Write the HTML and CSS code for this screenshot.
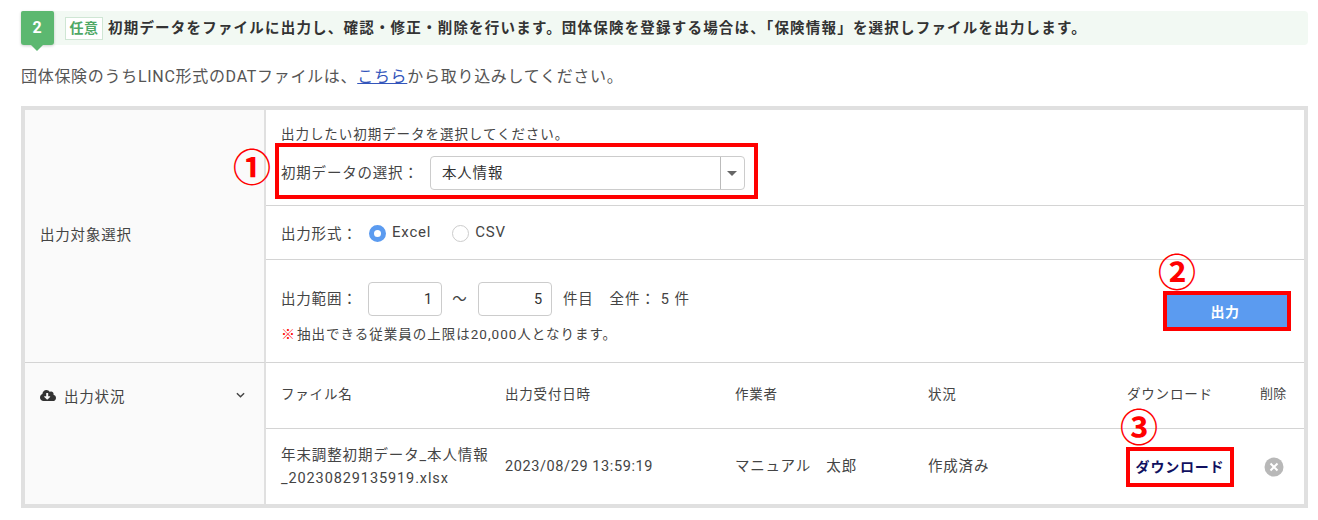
FILE: index.html
```html
<!DOCTYPE html>
<html lang="ja">

<head>
    <meta charset="UTF-8">
    <title>初期データ出力</title>
    <link rel="stylesheet" href="styles.css">
</head>

<body>
    <div class="step">
        <div class="step-no">2</div>
        <span class="step-tag">任意</span>
        <span class="step-text">初期データをファイルに出力し、確認・修正・削除を行います。団体保険を登録する場合は、「保険情報」を選択しファイルを出力します。</span>
    </div>
    <p class="lead">団体保険のうちLINC形式のDATファイルは、<a href="#">こちら</a>から取り込みしてください。</p>

    <div class="panel">
        <div class="side side-target">出力対象選択</div>
        <div class="main">
            <div class="row row-select">
                <p class="hint">出力したい初期データを選択してください。</p>
                <div class="select-line">
                    <label class="select-label">初期データの選択：</label>
                    <div class="select">
                        <span class="select-value">本人情報</span>
                        <span class="select-arrow"></span>
                    </div>
                    <span class="mark-box mark-select"></span>
                    <span class="mark-no mark-no-1">①</span>
                </div>
            </div>
            <div class="row row-format">
                <span class="format-label">出力形式：</span>
                <span class="radio radio-on"></span><span class="radio-text">Excel</span>
                <span class="radio"></span><span class="radio-text">CSV</span>
            </div>
            <div class="row row-range">
                <div class="range-left">
                    <div class="range-line">
                        <span class="range-label">出力範囲：</span>
                        <span class="num-input">1</span>
                        <span class="tilde">～</span>
                        <span class="num-input">5</span>
                        <span class="range-unit">件目</span>
                        <span class="range-total">全件： 5 件</span>
                    </div>
                    <p class="note"><span class="note-mark">※</span>抽出できる従業員の上限は20,000人となります。</p>
                </div>
                <div class="output-wrap">
                    <span class="mark-no mark-no-2">②</span>
                    <button class="output-btn">出力</button>
                </div>
            </div>
        </div>

        <div class="side side-status">
            <svg class="cloud" viewBox="0 0 640 512" width="16" height="13">
                <path fill="#333" d="M537.6 226.6c4.1-10.7 6.4-22.4 6.4-34.6 0-53-43-96-96-96-19.7 0-38.1 6-53.3 16.2C367 64.2 315.3 32 256 32c-88.4 0-160 71.6-160 160 0 2.7.1 5.4.2 8.1C40.2 219.8 0 273.2 0 336c0 79.5 64.5 144 144 144h368c70.7 0 128-57.3 128-128 0-61.9-44-113.6-102.4-125.4zm-132.9 88.7L299.3 420.7c-6.2 6.2-16.4 6.2-22.6 0L171.3 315.3c-10.1-10.1-2.9-27.3 11.3-27.3H248V176c0-8.8 7.2-16 16-16h48c8.8 0 16 7.2 16 16v112h65.4c14.2 0 21.4 17.2 11.3 27.3z" />
            </svg>
            <span class="status-title">出力状況</span>
            <svg class="chev" viewBox="0 0 10 6" width="9" height="6">
                <path d="M1 1l4 4 4-4" fill="none" stroke="#444" stroke-width="1.6" />
            </svg>
        </div>
        <div class="status">
            <div class="status-row status-head">
                <span class="c-name">ファイル名</span>
                <span class="c-date">出力受付日時</span>
                <span class="c-user">作業者</span>
                <span class="c-state">状況</span>
                <span class="c-dl">ダウンロード</span>
                <span class="c-del head-del">削除</span>
            </div>
            <div class="status-row status-body">
                <span class="c-name">年末調整初期データ_本人情報<br>_20230829135919.xlsx</span>
                <span class="c-date date-value">2023/08/29 13:59:19</span>
                <span class="c-user">マニュアル　太郎</span>
                <span class="c-state">作成済み</span>
                <span class="c-dl dl-cell">
                    <span class="mark-no mark-no-3">③</span>
                    <a class="dl-link" href="#">ダウンロード</a>
                </span>
                <span class="c-del">
                    <svg viewBox="0 0 20 20" width="20" height="20">
                        <circle cx="10" cy="10" r="9.5" fill="#b8b8b8" />
                        <path d="M6.5 6.5l7 7M13.5 6.5l-7 7" stroke="#fff" stroke-width="2" />
                    </svg>
                </span>
            </div>
        </div>
    </div>
</body>

</html>
```

FILE: styles.css
```css
body {
    font-family: Roboto, "Noto Sans CJK JP", sans-serif;
    color: #444;
    background-color: white;
    margin: 0;
    padding: 11px 10px 0 21px;
    font-size: 14.5px;
    letter-spacing: 0.8px;
}

p {
    margin: 0;
}

.step {
    display: flex;
    align-items: center;
    height: 34px;
    background-color: #f2f9f3;
    border-radius: 0 4px 4px 0;
}

.step-no {
    position: relative;
    width: 33px;
    height: 34px;
    line-height: 34px;
    text-align: center;
    color: white;
    font-weight: bold;
    font-size: 16px;
    background-color: #5cb870;
    border-radius: 2px 2px 3px 3px;
    box-shadow: 0 1px 3px rgba(0, 0, 0, 0.2);
}

.step-no::after {
    content: "";
    position: absolute;
    left: 10px;
    top: 34px;
    border-top: 6px solid #5cb870;
    border-left: 6px solid transparent;
    border-right: 6px solid transparent;
}

.step-tag {
    margin-left: 11px;
    width: 38px;
    height: 23px;
    line-height: 20px;
    box-sizing: border-box;
    text-align: center;
    background-color: white;
    border: 1px solid #cfe6d4;
    color: #4fa866;
    font-size: 14px;
    font-weight: bold;
    letter-spacing: 0.5px;
}

.step-text {
    margin-left: 5px;
    padding-bottom: 3px;
    color: #333;
    font-size: 14.5px;
    letter-spacing: 1.2px;
    font-weight: bold;
}

.lead {
    margin-top: 20px;
    font-size: 16px;
    letter-spacing: 0.7px;
    line-height: 24px;
    color: #555;
}

.lead a {
    color: #3355bb;
}

.panel {
    display: grid;
    grid-template-columns: 241px 1fr;
    margin-top: 17px;
    border: 4px solid #e0e0e0;
}

.side {
    background-color: #fafafa;
    border-right: 2px solid #e0e0e0;
    padding-left: 15px;
}

.side-target {
    display: flex;
    align-items: center;
    padding-bottom: 6px;
    border-bottom: 1px solid #d4d4d4;
}

.side-status {
    display: flex;
    align-items: center;
    height: 141px;
    box-sizing: border-box;
    padding-bottom: 77px;
    padding-right: 19px;
}

.status-title {
    margin-left: 8px;
    flex: 1;
}

.row {
    border-bottom: 1px solid #d4d4d4;
    padding-left: 15px;
    box-sizing: border-box;
}

.row-select {
    height: 96px;
    padding-top: 14px;
}

.hint {
    font-size: 13.5px;
    letter-spacing: 0.95px;
    line-height: 20px;
}

.select-line {
    position: relative;
    display: flex;
    align-items: center;
    margin-top: 12px;
}

.select-label {
    width: 149px;
    padding-bottom: 3px;
}

.select {
    display: flex;
    justify-content: space-between;
    align-items: center;
    width: 315px;
    height: 34px;
    box-sizing: border-box;
    border: 1px solid #ccc;
    border-radius: 4px;
    padding-left: 11px;
    color: #333;
}

.select-value {
    padding-bottom: 3px;
}

.select-arrow {
    position: relative;
    width: 23px;
    height: 32px;
    border-left: 1px solid #bbb;
}

.select-arrow::after {
    content: "";
    position: absolute;
    left: 6px;
    top: 14px;
    border-top: 5px solid #666;
    border-left: 5px solid transparent;
    border-right: 5px solid transparent;
}

.mark-box {
    position: absolute;
    border: 4px solid #f00;
}

.mark-select {
    left: -6px;
    top: -13px;
    width: 475px;
    height: 48px;
}

.mark-no {
    position: absolute;
    color: #f00;
    font-size: 38px;
    line-height: 38px;
    font-weight: bold;
    letter-spacing: 0;
}

.mark-no-1 {
    left: -48px;
    top: -7px;
}

.mark-no-2 {
    left: -9px;
    top: -41px;
}

.mark-no-3 {
    left: -6px;
    top: -38px;
}

.row-format {
    display: flex;
    align-items: center;
    height: 54px;
    padding-bottom: 1px;
}

.format-label {
    width: 88px;
}

.radio {
    display: inline-block;
    box-sizing: border-box;
    width: 17px;
    height: 17px;
    margin-top: 3px;
    border: 1px solid #ccc;
    border-radius: 50%;
    background-color: white;
}

.radio-on {
    border: 5px solid #5b9bf0;
}

.radio-text {
    margin-left: 6px;
    margin-right: 21px;
    font-size: 15px;
}

.row-range {
    display: flex;
    justify-content: space-between;
    height: 103px;
    padding-top: 22px;
    padding-right: 13px;
}

.range-line {
    display: flex;
    align-items: center;
}

.range-label {
    width: 87px;
    padding-bottom: 4px;
}

.num-input {
    width: 74px;
    height: 34px;
    line-height: 33px;
    box-sizing: border-box;
    border: 1px solid #ccc;
    border-radius: 4px;
    text-align: right;
    padding-right: 8px;
    color: #333;
}

.tilde {
    width: 36px;
    padding-bottom: 4px;
    text-align: center;
}

.range-unit {
    margin-left: 11px;
    padding-bottom: 4px;
}

.range-total {
    margin-left: 16px;
    padding-bottom: 4px;
    letter-spacing: 1px;
}

.note {
    margin-top: 8px;
    font-size: 13.5px;
    letter-spacing: 1px;
    line-height: 20px;
}

.note-mark {
    margin-right: 2px;
    color: #f00;
    font-size: 14px;
    font-weight: bold;
    letter-spacing: 0;
}

.output-wrap {
    position: relative;
    margin-top: 9px;
    width: 128px;
    height: 40px;
    box-sizing: border-box;
    border: 4px solid #f00;
}

.output-btn {
    display: block;
    width: 100%;
    height: 100%;
    padding: 0 4px 0 0;
    font-family: inherit;
    font-size: 14px;
    font-weight: bold;
    letter-spacing: 0.6px;
    color: white;
    background-color: #5b9bf0;
    border: none;
}

.status-row {
    display: grid;
    grid-template-columns: 224px 230px 193px 199px 133px 1fr;
    align-items: center;
    padding-left: 15px;
}

.status-head {
    height: 66px;
    padding-bottom: 6px;
    box-sizing: border-box;
    border-bottom: 1px solid #d4d4d4;
    font-size: 13.5px;
}

.status-body {
    height: 75px;
    line-height: 23px;
}

.status-body .c-name {
    letter-spacing: 0.9px;
}

.date-value {
    letter-spacing: 0.6px;
}

.head-del {
    font-size: 13px;
    letter-spacing: 0.3px;
}

.dl-cell {
    position: relative;
    justify-self: start;
    margin-left: -1px;
}

.dl-link {
    display: block;
    width: 108px;
    height: 40px;
    line-height: 32px;
    box-sizing: border-box;
    border: 4px solid #f00;
    text-align: center;
    font-size: 14px;
    font-weight: bold;
    color: #101060;
    text-decoration: none;
}

.c-del svg {
    display: block;
    margin-left: 4px;
}
```
